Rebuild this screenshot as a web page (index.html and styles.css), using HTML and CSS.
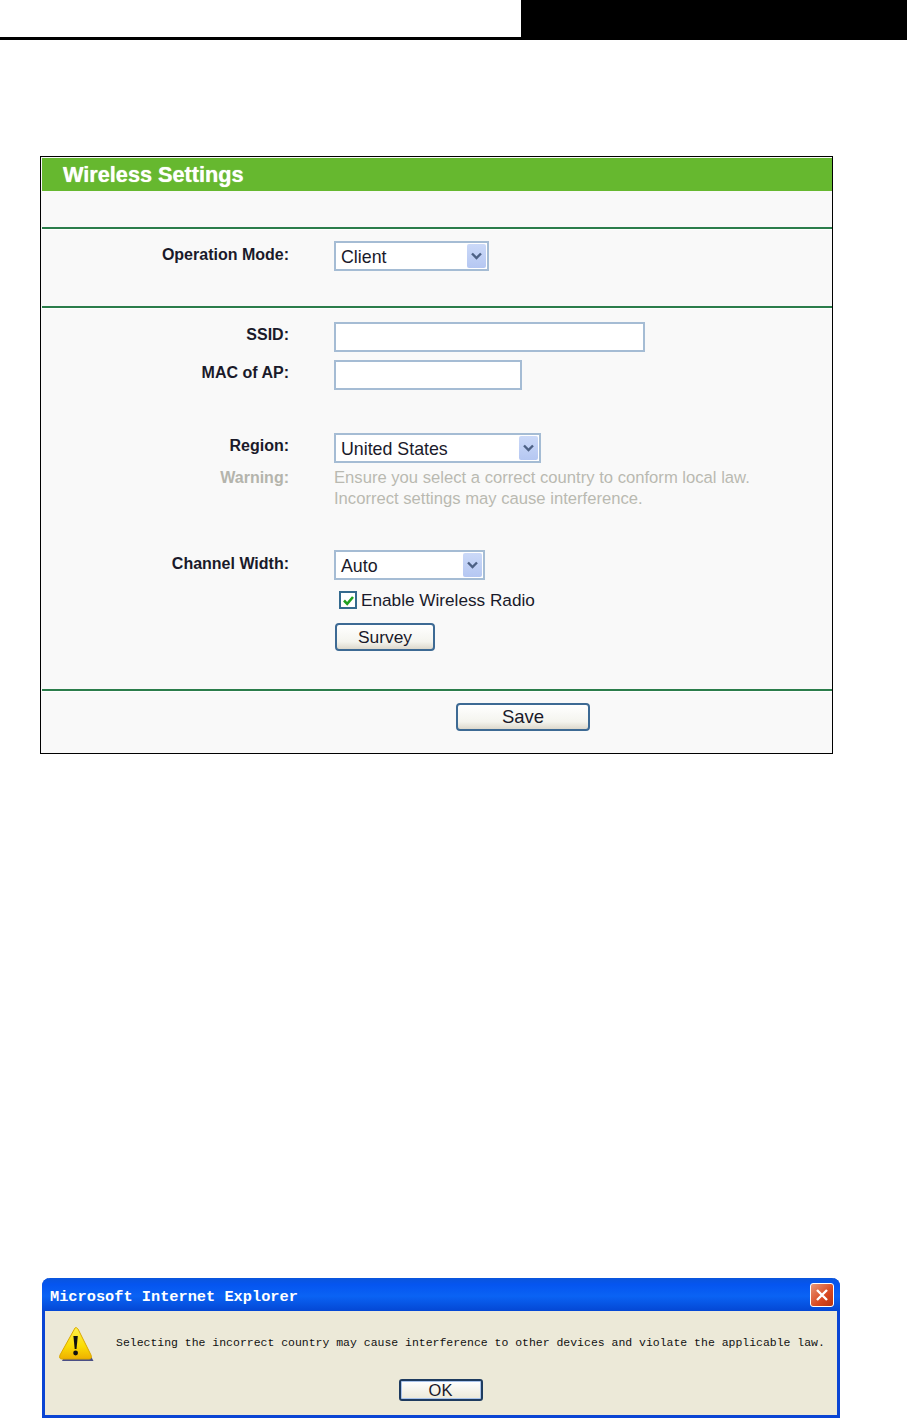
FILE: index.html
```html
<!DOCTYPE html>
<html lang="en">
<head>
    <meta charset="UTF-8">
    <title>Wireless Settings</title>
    <link rel="stylesheet" href="styles.css">
</head>
<body>
    <div class="page-head">
        <div class="head-left"></div>
        <div class="head-right"></div>
    </div>

    <div class="panel">
        <div class="panel-title">Wireless Settings</div>
        <div class="gap-top"></div>

        <div class="section mode-section">
            <div class="row">
                <div class="label">Operation Mode:</div>
                <div class="select w-client">
                    <span class="select-text">Client</span>
                    <span class="arrow"><svg width="11" height="8" viewBox="0 0 11 8"><path d="M1 1.5 5.5 6 10 1.5" fill="none" stroke="#4d6185" stroke-width="2.4"/></svg></span>
                </div>
            </div>
        </div>

        <div class="section main-section">
            <div class="row">
                <div class="label">SSID:</div>
                <div class="input w-ssid"></div>
            </div>
            <div class="row row-mac">
                <div class="label">MAC of AP:</div>
                <div class="input w-mac"></div>
            </div>
            <div class="row row-region">
                <div class="label">Region:</div>
                <div class="select w-region">
                    <span class="select-text">United States</span>
                    <span class="arrow"><svg width="11" height="8" viewBox="0 0 11 8"><path d="M1 1.5 5.5 6 10 1.5" fill="none" stroke="#4d6185" stroke-width="2.4"/></svg></span>
                </div>
            </div>
            <div class="row row-warning">
                <div class="label label-muted">Warning:</div>
                <div class="warning-text">Ensure you select a correct country to conform local law.<br>Incorrect settings may cause interference.</div>
            </div>
            <div class="row row-width">
                <div class="label">Channel Width:</div>
                <div class="select w-width">
                    <span class="select-text">Auto</span>
                    <span class="arrow"><svg width="11" height="8" viewBox="0 0 11 8"><path d="M1 1.5 5.5 6 10 1.5" fill="none" stroke="#4d6185" stroke-width="2.4"/></svg></span>
                </div>
            </div>
            <div class="row row-check">
                <div class="label"></div>
                <div class="check-wrap">
                    <span class="checkbox"><svg width="13" height="13" viewBox="0 0 13 13"><path d="M2 6.5 5.2 9.8 11 3" fill="none" stroke="#21a121" stroke-width="2.6"/></svg></span>
                    <span>Enable Wireless Radio</span>
                </div>
            </div>
            <div class="row row-survey">
                <div class="label"></div>
                <div class="btn btn-survey">Survey</div>
            </div>
        </div>

        <div class="section save-section">
            <div class="btn btn-save">Save</div>
        </div>
    </div>

    <div class="dialog">
        <div class="dialog-title">
            <span class="dialog-name">Microsoft Internet Explorer</span>
            <span class="dialog-close"><svg width="16" height="16" viewBox="0 0 16 16"><path d="M3 3 13 13M13 3 3 13" stroke="#fff" stroke-width="2.4" fill="none"/></svg></span>
        </div>
        <div class="dialog-body">
            <div class="dialog-msg">
                <svg class="warn-icon" width="36" height="37" viewBox="0 0 36 37">
                    <defs>
                        <linearGradient id="warnFill" x1="0" y1="0" x2="0" y2="1">
                            <stop offset="0" stop-color="#fff04a"/>
                            <stop offset="0.6" stop-color="#fbdc05"/>
                            <stop offset="1" stop-color="#eeb000"/>
                        </linearGradient>
                    </defs>
                    <path d="M19 4 35.500 35H4Z" fill="#4a4f86"/>
                    <path d="M17 2C18 1 19 2 20 3L33 29C34 32 33 33 31 33H4C2 33 1 32 2 29Z" fill="url(#warnFill)" stroke="#dba800" stroke-width="1"/>
                    <path d="M15.400 10H19.800L18.500 23H16.700Z" fill="#111"/>
                    <circle cx="17.600" cy="27" r="2.400" fill="#111"/>
                </svg>
                <span class="dialog-text">Selecting the incorrect country may cause interference to other devices and violate the applicable law.</span>
            </div>
            <div class="dialog-actions">
                <div class="dialog-ok">OK</div>
            </div>
        </div>
    </div>
</body>
</html>
```

FILE: styles.css
```css
html, body {
    margin: 0;
    padding: 0;
}
body {
    width: 907px;
    height: 1419px;
    overflow: hidden;
    background-color: #fff;
    font-family: "Liberation Sans", Arial, sans-serif;
    color: #1a1a2a;
}
.page-head {
    display: flex;
    height: 37px;
    border-bottom: 3px solid #000;
}
.head-left {
    width: 521px;
}
.head-right {
    flex: 1;
    background-color: #000;
}
.panel {
    box-sizing: border-box;
    width: 793px;
    height: 598px;
    margin: 116px 0 0 40px;
    padding: 1px 0 0 1px;
    border: 1px solid #000;
    background-color: #f9f9f9;
}
.panel-title {
    box-sizing: border-box;
    height: 33px;
    padding-left: 21px;
    background-color: #66b82f;
    color: #fff;
    font-size: 21.7px;
    font-weight: bold;
    line-height: 33px;
    text-shadow: 0 0 1px #e8f5d8;
}
.gap-top {
    height: 36px;
}
.section {
    border-top: 2px solid #2b7d4b;
    box-shadow: inset 0 1px 0 #fff;
}
.mode-section {
    box-sizing: border-box;
    height: 79px;
    padding-top: 12px;
}
.main-section {
    box-sizing: border-box;
    height: 383px;
    padding-top: 14px;
}
.save-section {
    box-sizing: border-box;
    height: 62px;
    padding: 12px 0 0 414px;
}
.row {
    display: flex;
    align-items: flex-start;
}
.label {
    width: 247px;
    margin-right: 45px;
    text-align: right;
    font-size: 16px;
    font-weight: bold;
    line-height: 26px;
    flex-shrink: 0;
}
.mode-section .label, .row-width .label {
    line-height: 28px;
}
.row-warning .label-muted {
    color: #b4b4ac;
    line-height: 21px;
}
.select, .input {
    box-sizing: border-box;
    height: 30px;
    border: 2px solid #a5bcd4;
    background-color: #fff;
}
.select {
    display: flex;
    justify-content: space-between;
    font-size: 17.8px;
    line-height: 29px;
}
.select-text {
    padding-left: 5px;
}
.arrow {
    display: flex;
    align-items: center;
    justify-content: center;
    width: 19px;
    margin: 1px;
    background: linear-gradient(#cbd9f8, #b5c7f2);
    border-radius: 2px;
}
.w-client {
    width: 155px;
}
.w-region {
    width: 207px;
}
.w-width {
    width: 151px;
}
.w-ssid {
    width: 311px;
}
.w-mac {
    width: 188px;
}
.row-mac {
    margin-top: 8px;
}
.row-region {
    margin-top: 43px;
}
.row-warning {
    margin-top: 4px;
}
.warning-text {
    color: #b9b9b1;
    font-size: 16.64px;
    line-height: 21px;
}
.row-width {
    margin-top: 41px;
}
.row-check {
    margin-top: 7px;
}
.check-wrap {
    display: flex;
    align-items: center;
    margin-left: 5px;
    font-size: 17.2px;
    line-height: 26px;
}
.checkbox {
    box-sizing: border-box;
    display: flex;
    align-items: center;
    justify-content: center;
    width: 18px;
    height: 18px;
    margin-right: 4px;
    border: 2px solid #346a8e;
    background-color: #fff;
}
.row-survey {
    margin-top: 10px;
}
.btn {
    box-sizing: border-box;
    border: 2px solid #3d6a94;
    border-radius: 4px;
    background: linear-gradient(#fff, #f4f4ee 70%, #dcd8cc);
    text-align: center;
}
.btn-survey {
    width: 100px;
    height: 28px;
    margin-left: 1px;
    font-size: 17.4px;
    line-height: 24px;
}
.btn-save {
    width: 134px;
    height: 28px;
    font-size: 18.5px;
    line-height: 24px;
}
.dialog {
    box-sizing: border-box;
    width: 798px;
    height: 140px;
    margin: 524px 0 0 42px;
    border: solid #0a45d4;
    border-width: 0 3px 3px;
    border-radius: 8px 8px 0 0;
    background-color: #ece9d8;
}
.dialog-title {
    display: flex;
    justify-content: space-between;
    align-items: center;
    box-sizing: border-box;
    height: 33px;
    margin: 0 -3px;
    padding: 0 6px 0 8px;
    border-radius: 8px 8px 0 0;
    background: linear-gradient(#0a55dc, #0555f0 20%, #0a63f4 55%, #0447d4);
}
.dialog-name {
    padding-top: 4px;
    color: #fff;
    font-family: "Liberation Mono", monospace;
    font-size: 15.3px;
    font-weight: bold;
}
.dialog-close {
    box-sizing: border-box;
    display: flex;
    align-items: center;
    justify-content: center;
    width: 24px;
    height: 24px;
    border: 1px solid #fff;
    border-radius: 3px;
    background: linear-gradient(135deg, #e8987a, #d9481f 60%, #b83410);
}
.dialog-msg {
    display: flex;
    align-items: flex-start;
    padding: 13px 0 0 13px;
}
.warn-icon {
    flex-shrink: 0;
    margin-top: 2px;
}
.dialog-text {
    margin: 12px 0 0 22px;
    white-space: nowrap;
    font-family: "Liberation Mono", monospace;
    font-size: 11.48px;
    color: #111;
}
.dialog-actions {
    display: flex;
    justify-content: center;
    margin-top: 16px;
    padding-right: 1px;
}
.dialog-ok {
    box-sizing: border-box;
    width: 84px;
    height: 22px;
    border: 2px solid #1e3b5f;
    border-radius: 3px;
    box-shadow: inset 0 0 0 1px #a9c3ea;
    background: linear-gradient(#fff, #ece9d8);
    text-align: center;
    font-size: 16.5px;
    line-height: 18px;
}
```
